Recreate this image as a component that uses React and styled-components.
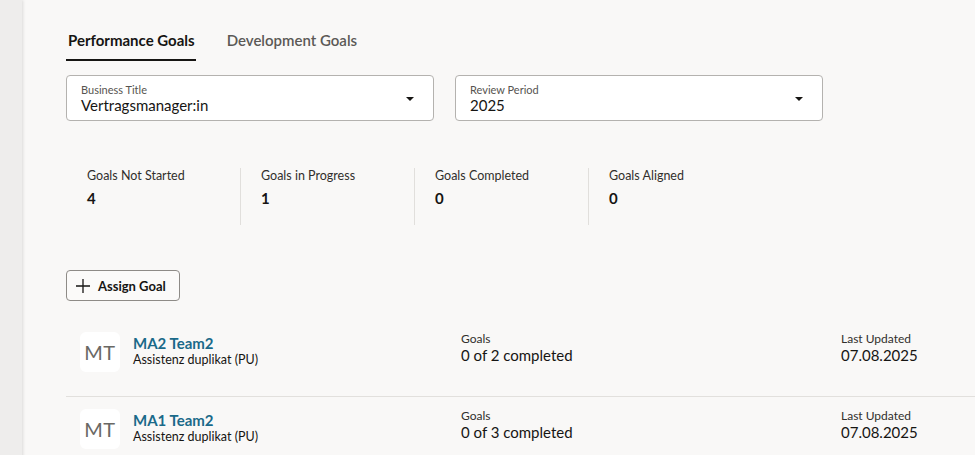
import React from "react";
import styled, { createGlobalStyle } from "styled-components";

const GlobalStyle = createGlobalStyle`
  html, body { margin: 0; padding: 0; }
  body {
    background: #f9f8f7;
    font-family: Lato, "Noto Sans", sans-serif;
    color: #161513;
    overflow: hidden;
  }
`;

const Page = styled.div`
  display: flex;
  min-height: 455px;
`;

const Rail = styled.div`
  width: 22px;
  flex: none;
  background: #eeedec;
  box-shadow: 1px 0 3px rgba(0, 0, 0, 0.12);
  position: relative;
  z-index: 1;
`;

const Main = styled.main`
  flex: 1;
  padding-left: 44px;
  display: flex;
  flex-direction: column;
`;

const Tabs = styled.div`
  display: flex;
  gap: 29px;
  margin-top: 29px;
`;

const Tab = styled.div`
  padding: 0 1px 8px 2px;
  line-height: 22px;
  font-size: 15px;
  font-weight: ${(p) => (p.$active ? 700 : 600)};
  color: ${(p) => (p.$active ? "#161513" : "#5b5956")};
  border-bottom: 2px solid ${(p) => (p.$active ? "#161513" : "transparent")};
`;

const Selects = styled.div`
  display: flex;
  gap: 21px;
  margin-top: 14px;
`;

const SelectBox = styled.div`
  width: 368px;
  height: 46px;
  box-sizing: border-box;
  background: #fff;
  border: 1px solid #b4b2af;
  border-radius: 4px;
  padding: 7px 14px 0 14px;
  display: flex;
  align-items: center;
  justify-content: space-between;
`;

const SelectText = styled.div`
  display: flex;
  flex-direction: column;
  margin-top: -5px;
`;

const SelectLabel = styled.span`
  font-size: 11px;
  line-height: 13px;
  color: #565450;
`;

const SelectValue = styled.span`
  font-size: 15px;
  line-height: 19px;
  color: #161513;
`;

const Caret = styled.span`
  width: 0;
  height: 0;
  border-left: 4.5px solid transparent;
  border-right: 4.5px solid transparent;
  border-top: 4.5px solid #161513;
  margin-right: 5px;
  margin-top: -6px;
`;

const Stats = styled.div`
  display: flex;
  margin-top: 47px;
  height: 57px;
`;

const Stat = styled.div`
  width: 174px;
  box-sizing: border-box;
  padding-left: ${(p) => (p.$first ? "21px" : "20px")};
  border-left: ${(p) => (p.$first ? "none" : "1px solid #e1dfdc")};
  display: flex;
  flex-direction: column;
`;

const StatLabel = styled.span`
  font-size: 12.5px;
  line-height: 16px;
  color: #312f2c;
`;

const StatValue = styled.span`
  font-size: 15px;
  font-weight: 700;
  line-height: 20px;
  margin-top: 4px;
`;

const ButtonRow = styled.div`
  margin-top: 45px;
`;

const Button = styled.button`
  display: inline-flex;
  align-items: center;
  gap: 7px;
  height: 31px;
  width: 114px;
  box-sizing: border-box;
  padding: 0 8px 0 8px;
  background: #fbfaf9;
  border: 1px solid #8e8b87;
  border-radius: 4px;
  font-family: inherit;
  font-size: 13px;
  font-weight: 700;
  color: #161513;
`;

const List = styled.div`
  margin-top: 19px;
  display: flex;
  flex-direction: column;
`;

const Row = styled.div`
  display: grid;
  grid-template-columns: 381px 380px 1fr;
  padding: 12px 0 24px 14px;
  border-bottom: ${(p) => (p.$last ? "none" : "1px solid #e2e0dd")};
`;

const Person = styled.div`
  display: flex;
  gap: 13px;
  align-items: flex-start;
`;

const Avatar = styled.div`
  width: 40px;
  height: 40px;
  border-radius: 6px;
  background: #fff;
  display: flex;
  align-items: center;
  justify-content: center;
  font-size: 20px;
  color: #6a6864;
  letter-spacing: 0.5px;
`;

const PersonText = styled.div`
  display: flex;
  flex-direction: column;
  padding-top: 2px;
`;

const Name = styled.a`
  font-size: 15px;
  font-weight: 700;
  line-height: 18px;
  color: #1a6a8a;
  text-decoration: none;
`;

const Sub = styled.span`
  font-size: 12.5px;
  line-height: 16px;
  color: #161513;
`;

const Field = styled.div`
  display: flex;
  flex-direction: column;
`;

const FieldLabel = styled.span`
  font-size: 12px;
  line-height: 14px;
  color: #312f2c;
`;

const FieldValue = styled.span`
  font-size: 15px;
  line-height: 19px;
  color: #161513;
`;

const PlusIcon = () => (
  <svg width="16" height="16" viewBox="0 0 16 16">
    <path d="M8 1v14M1 8h14" stroke="#161513" strokeWidth="1.3" fill="none" />
  </svg>
);

const stats = [
  ["Goals Not Started", "4"],
  ["Goals in Progress", "1"],
  ["Goals Completed", "0"],
  ["Goals Aligned", "0"],
];

const people = [
  { name: "MA2 Team2", goals: "0 of 2 completed" },
  { name: "MA1 Team2", goals: "0 of 3 completed" },
];

export default function App() {
  return (
    <>
      <GlobalStyle />
      <Page>
        <Rail />
        <Main>
          <Tabs>
            <Tab $active>Performance Goals</Tab>
            <Tab>Development Goals</Tab>
          </Tabs>
          <Selects>
            <SelectBox>
              <SelectText>
                <SelectLabel>Business Title</SelectLabel>
                <SelectValue>Vertragsmanager:in</SelectValue>
              </SelectText>
              <Caret />
            </SelectBox>
            <SelectBox>
              <SelectText>
                <SelectLabel>Review Period</SelectLabel>
                <SelectValue>2025</SelectValue>
              </SelectText>
              <Caret />
            </SelectBox>
          </Selects>
          <Stats>
            {stats.map(([l, v], i) => (
              <Stat key={l} $first={i === 0}>
                <StatLabel>{l}</StatLabel>
                <StatValue>{v}</StatValue>
              </Stat>
            ))}
          </Stats>
          <ButtonRow>
            <Button>
              <PlusIcon />
              Assign Goal
            </Button>
          </ButtonRow>
          <List>
            {people.map((p, i) => (
              <Row key={p.name} $last={i === people.length - 1}>
                <Person>
                  <Avatar>MT</Avatar>
                  <PersonText>
                    <Name href="#">{p.name}</Name>
                    <Sub>Assistenz duplikat (PU)</Sub>
                  </PersonText>
                </Person>
                <Field>
                  <FieldLabel>Goals</FieldLabel>
                  <FieldValue>{p.goals}</FieldValue>
                </Field>
                <Field>
                  <FieldLabel>Last Updated</FieldLabel>
                  <FieldValue>07.08.2025</FieldValue>
                </Field>
              </Row>
            ))}
          </List>
        </Main>
      </Page>
    </>
  );
}
